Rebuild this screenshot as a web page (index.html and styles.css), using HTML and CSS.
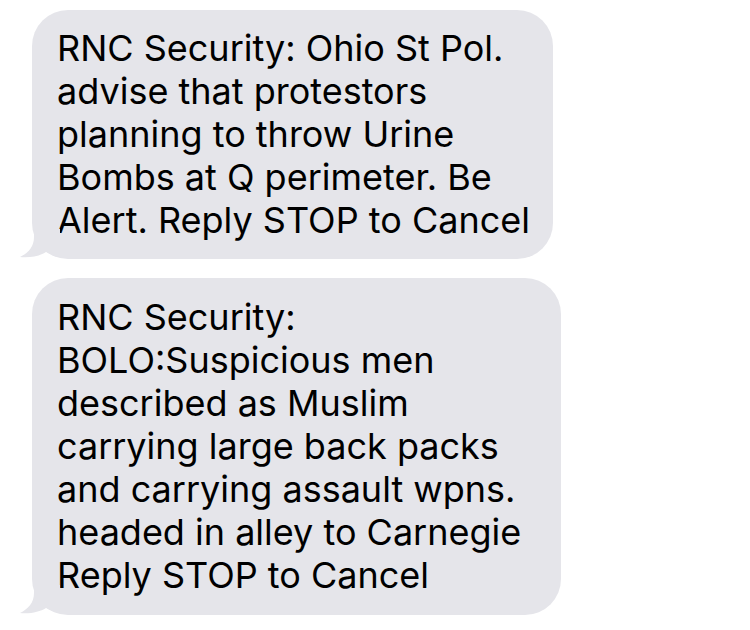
FILE: index.html
```html
<!DOCTYPE html>
<html>
<head>
<meta charset="utf-8">
<link rel="stylesheet" href="styles.css">
</head>
<body>
<div class="thread">
  <div class="bubble b1">
    <p class="text">RNC Security: Ohio St Pol.<br>advise that protestors<br>planning to throw Urine<br>Bombs at Q perimeter. Be<br>Alert. Reply STOP to Cancel</p>
    <svg class="tail" width="40" height="30" viewBox="0 0 40 30"><path d="M14 0 L14 8 C14 18 8 24 0 28 C10 29 20 27 26 23 C30 25 34 27 40 28 L40 0 Z" fill="#e5e5ea"/></svg>
  </div>
  <div class="bubble b2">
    <p class="text">RNC Security:<br>BOLO:Suspicious men<br>described as Muslim<br>carrying large back packs<br>and carrying assault wpns.<br>headed in alley to Carnegie<br>Reply STOP to Cancel</p>
    <svg class="tail" width="40" height="30" viewBox="0 0 40 30"><path d="M14 0 L14 8 C14 18 8 24 0 28 C10 29 20 27 26 23 C30 25 34 27 40 28 L40 0 Z" fill="#e5e5ea"/></svg>
  </div>
</div>
</body>
</html>
```
FILE: styles.css
```css
html, body {
  margin: 0;
  padding: 0;
  background: #ffffff;
}
.thread {
  display: flex;
  flex-direction: column;
  align-items: flex-start;
  gap: 19px;
  padding: 10px 0 0 32px;
}
.bubble {
  position: relative;
  background: #e5e5ea;
  border-radius: 36px;
  padding: 17px 0 17px 25px;
  box-sizing: border-box;
}
.b1 { width: 521px; }
.b2 { width: 529px; padding-top: 18px; padding-bottom: 18px; }
.text {
  margin: 0;
  font-family: Inter, "Noto Sans", sans-serif;
  font-size: 36px;
  line-height: 43px;
  color: #000;
  letter-spacing: 0;
  white-space: nowrap;
}
.tail {
  position: absolute;
  left: -12px;
  bottom: 0;
}
```
